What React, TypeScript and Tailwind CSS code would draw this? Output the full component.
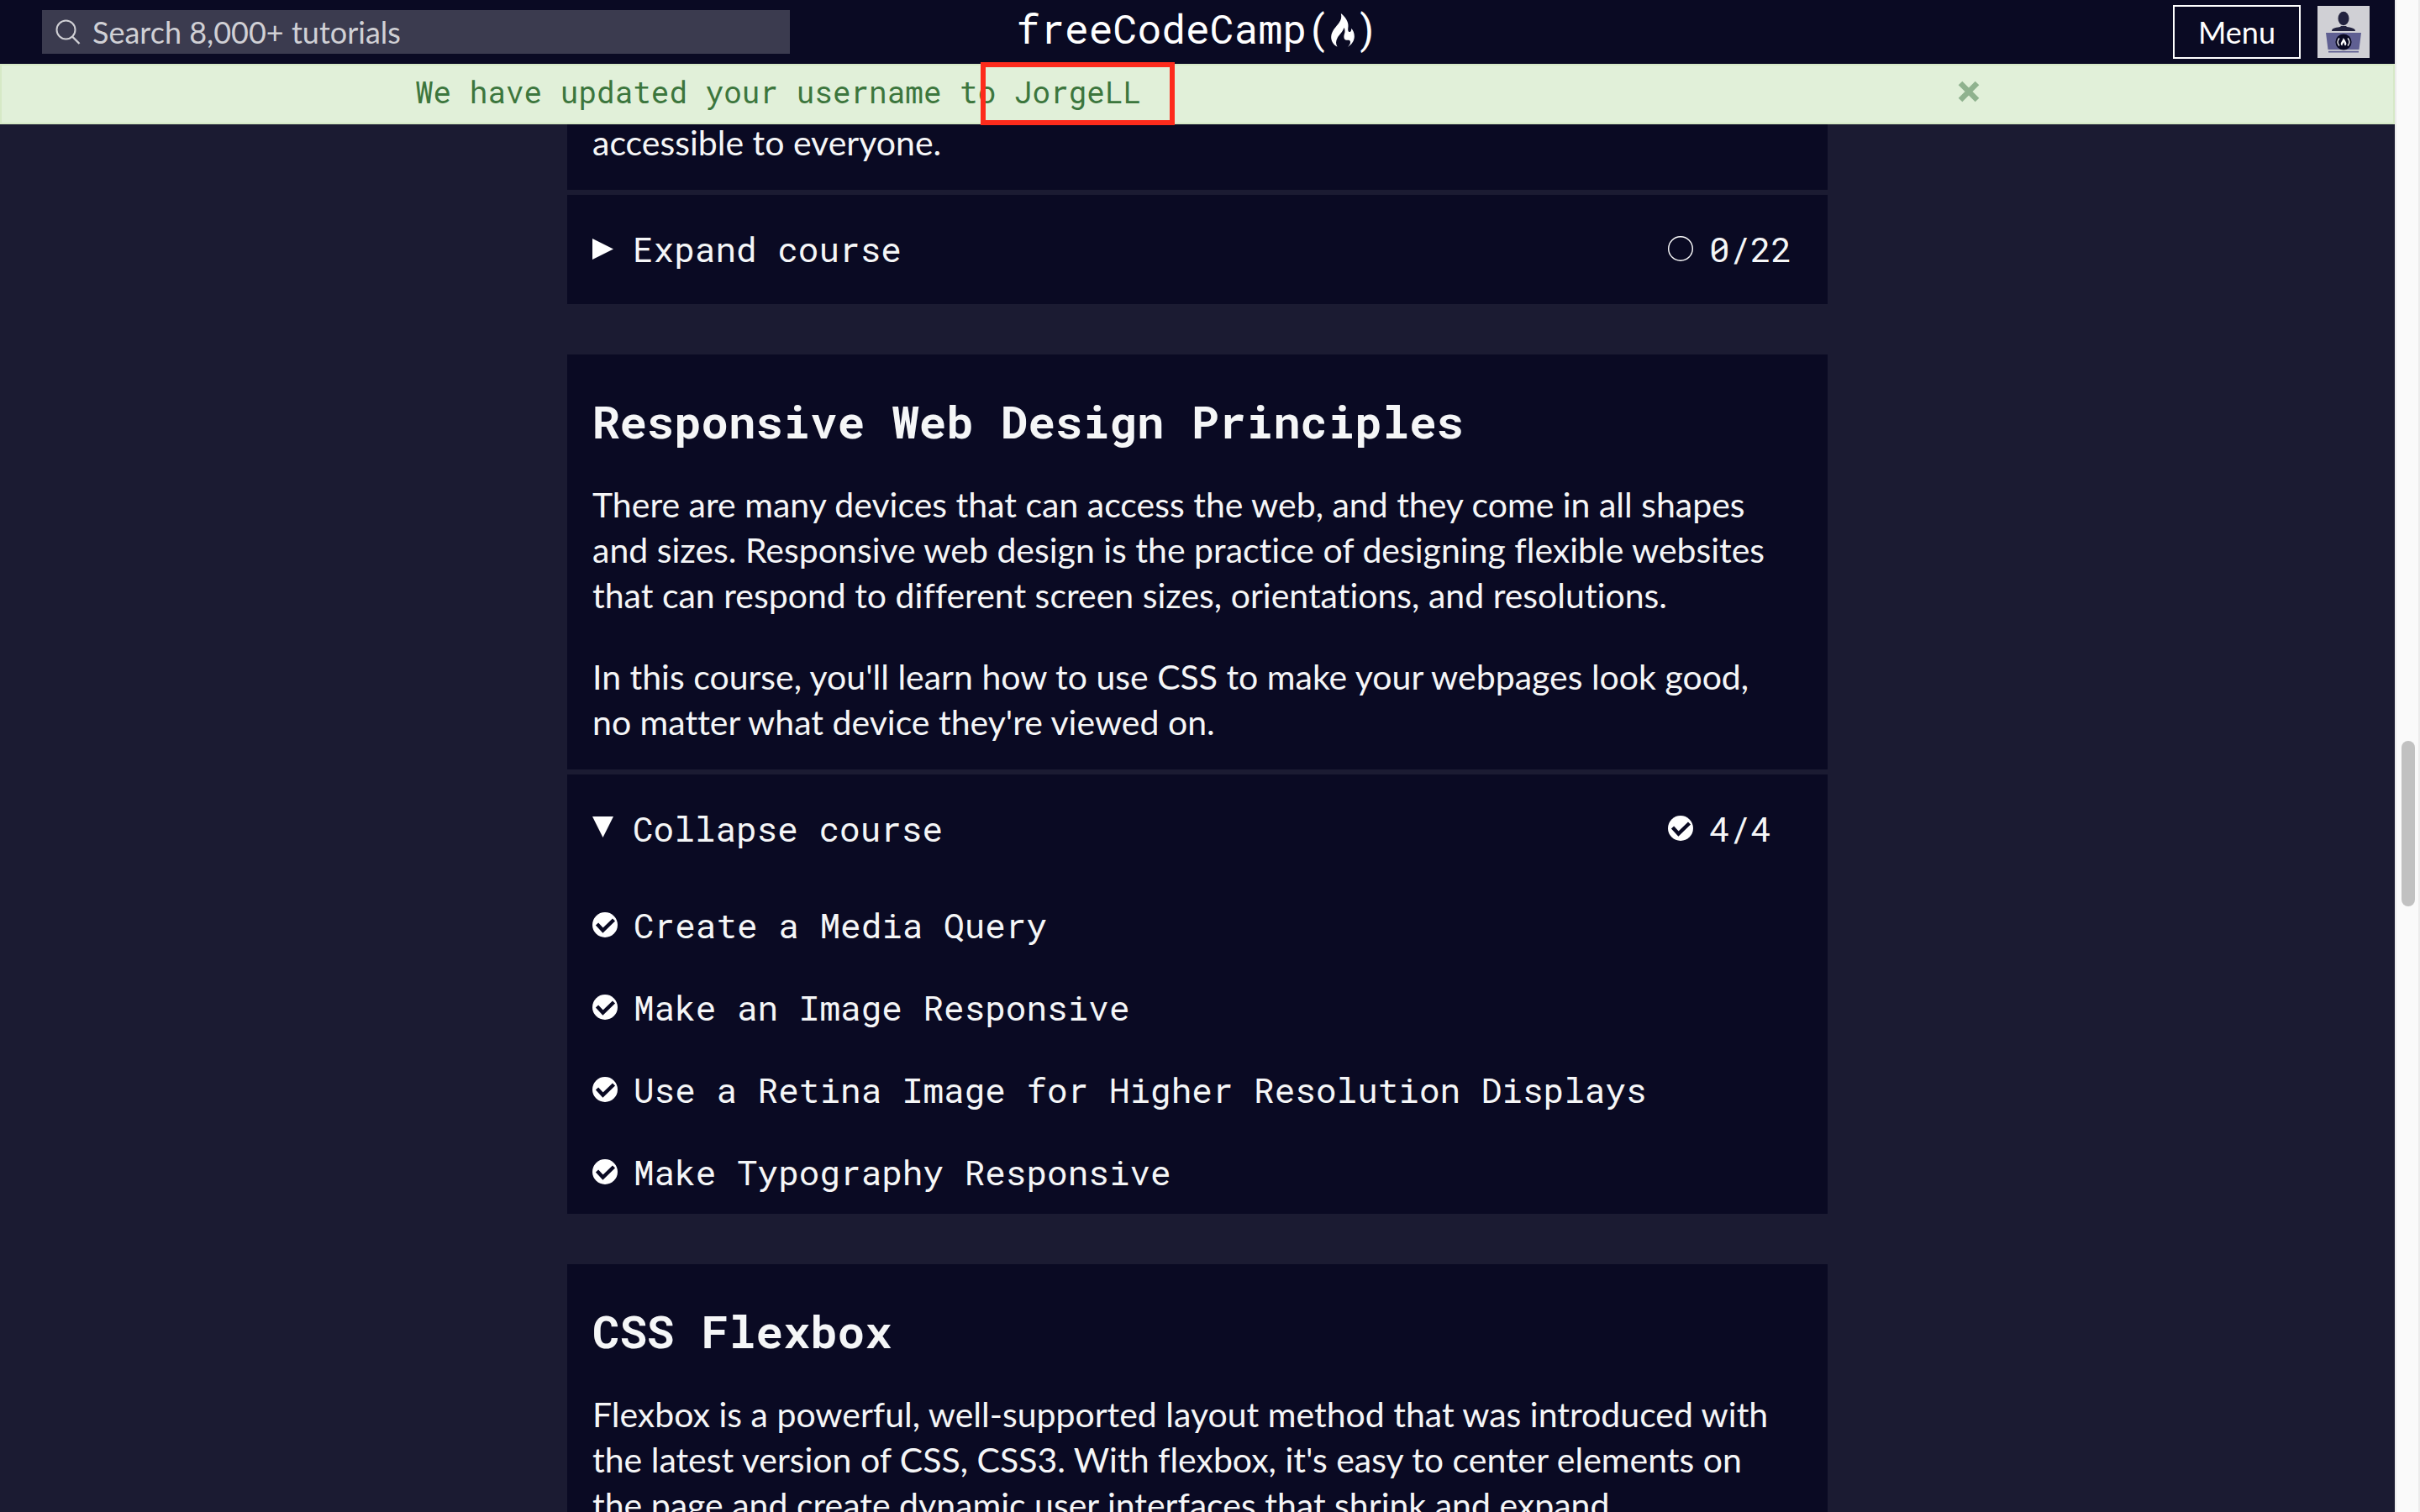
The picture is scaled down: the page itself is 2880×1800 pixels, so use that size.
import React from "react";

const mono = "font-['Roboto_Mono','Liberation_Mono',monospace]";

function CheckIcon() {
  return (
    <svg viewBox="0 0 30 30" className="size-[30px] shrink-0" aria-hidden="true">
      <circle cx="15" cy="15" r="15" fill="#fff" />
      <path d="M5.500 14 12.500 21.500 25.500 9" fill="none" stroke="#0a0a23" strokeWidth="4.400" />
    </svg>
  );
}

function EmptyCircleIcon() {
  return (
    <svg viewBox="0 0 30 30" className="size-[30px] shrink-0" aria-hidden="true">
      <circle cx="15" cy="15" r="14.300" fill="none" stroke="#fff" strokeWidth="1.400" />
    </svg>
  );
}

function Triangle({ open }: { open: boolean }) {
  return (
    <svg viewBox="0 0 25 25" className={open ? "mb-1 size-[25px] shrink-0" : "size-[25px] shrink-0"} aria-hidden="true">
      <path d={open ? "M0 0H25L12.500 25Z" : "M0 0 25 12.500 0 25Z"} fill="#fff" />
    </svg>
  );
}

const flame =
  "M35 0C38 14 36 22 28 34C18 48 1 62 0 84C0 100 9 113 22 119C16 108 16 98 23 86C30 74 42 66 46 50C50 58 50 66 47 74C44 84 46 94 54 95C62 95 66 94 68 99C70 107 66 113 59 120C73 112 83 98 83 82C83 70 79 60 72 53C73 61 70 67 65 66C59 65 60 56 61 46C62 28 50 12 35 0Z";

function Logo() {
  return (
    <a href="#home" aria-label="freeCodeCamp" className={`${mono} flex items-end pb-2 text-[48px] leading-[52px] text-white`}>
      <span>freeCodeCamp(</span>
      <svg viewBox="0 0 83 120" className="mb-1 h-10 w-7" aria-hidden="true">
        <path d={flame} fill="#fff" />
      </svg>
      <span>)</span>
    </a>
  );
}

function Avatar() {
  return (
    <svg viewBox="0 0 62 62" className="size-[62px]" aria-hidden="true">
      <path d="M0 0H62V62H0Z" fill="#d0d0d5" />
      <ellipse cx="31" cy="15" rx="6.500" ry="8.200" fill="#23233f" />
      <path d="M17 30C17 27 20 26 27 25L28 24H34L35 25C42 26 45 27 45 30Z" fill="#23233f" />
      <path d="M10 32H52L49.500 52H12.500Z" fill="#5f5f92" />
      <path d="M13 53.800H49V55.600H13Z" fill="#5f5f92" />
      <circle cx="31" cy="43" r="9.600" fill="#0a0a23" />
      <path d="M26 38.500Q22 43 26 47.500M36 38.500Q40 43 36 47.500" fill="none" stroke="#fff" strokeWidth="1.300" />
      <path d="M30.500 38C31 40.500 27.500 43 27.800 45.500 28 46.500 28.500 47 29.500 47.500 29 45.500 31 44.500 31.500 43 32 45 31.500 46 33 47.500 35 46 34.500 44 33.500 42.500 33 41 32 39.500 30.500 38Z" fill="#fff" />
    </svg>
  );
}

function Header() {
  return (
    <header className="grid grid-cols-[1fr_auto_1fr] items-center bg-[#0a0a23] px-[30px]">
      <form className="ml-5 flex h-[52px] max-w-[890px] items-center gap-[14px] bg-[#3b3b4f] pl-4" onSubmit={(e) => e.preventDefault()}>
        <svg viewBox="0 0 30 30" className="size-[30px] shrink-0" aria-hidden="true">
          <circle cx="12.500" cy="12.500" r="11" fill="none" stroke="#d0d0d5" strokeWidth="2" />
          <path d="M20 20.500 28.500 29" stroke="#d0d0d5" strokeWidth="2.400" />
        </svg>
        <input
          type="text"
          aria-label="Search"
          placeholder="Search 8,000+ tutorials"
          className="h-full min-w-0 flex-1 bg-transparent text-[36px] text-white outline-none placeholder:text-[#d0d0d5]"
        />
      </form>
      <Logo />
      <div className="flex h-[76px] items-center justify-end gap-5">
        <button type="button" className="h-16 border-2 border-white px-7 text-[36px] leading-[60px] text-white">
          Menu
        </button>
        <a href="#profile" aria-label="Profile">
          <Avatar />
        </a>
      </div>
    </header>
  );
}

function Alert() {
  return (
    <div role="alert" className="relative z-10 border-2 border-[#d6e9c6] bg-[#e1f0d9] pt-[6px] pb-3">
      <div className={`${mono} mx-auto flex max-w-[1862px] items-center justify-between text-[36px] leading-[50px] text-[#3c763d]`}>
        <p>
          We have updated your username to{" "}
          <span className="relative inline-block">
            JorgeLL
            <span className="absolute -inset-x-10 -top-[10px] -bottom-[15px] border-6 border-[#fd2b1c]" />
          </span>
        </p>
        <button type="button" aria-label="Close">
          <svg viewBox="0 0 26 26" className="size-[26px]" aria-hidden="true">
            <path d="M3 3 23 23M23 3 3 23" stroke="#8fb28e" strokeWidth="6.500" />
          </svg>
        </button>
      </div>
    </div>
  );
}

function Intro({ title, paragraphs }: { title?: string; paragraphs: string[] }) {
  return (
    <div className={title ? "bg-[#0a0a23] px-[30px] pt-[49px] pb-[29px]" : "bg-[#0a0a23] px-[30px] pb-[29px]"}>
      {title && <h2 className={`${mono} mb-[43px] text-[54px] leading-[60px] font-bold`}>{title}</h2>}
      <div className="flex max-w-[1420px] flex-col gap-[43px] text-[41px] leading-[54px] [font-variant-ligatures:none]">
        {paragraphs.map((p) => (
          <p key={p}>{p}</p>
        ))}
      </div>
    </div>
  );
}

function CourseToggle({ open, count }: { open: boolean; count: string }) {
  return (
    <button type="button" aria-expanded={open} className="flex w-full items-center justify-between pt-[37px] pb-[39px] text-left">
      <span className="flex items-center gap-[23px]">
        <Triangle open={open} />
        {open ? "Collapse course" : "Expand course"}
      </span>
      <span className="flex w-[160px] items-center gap-[19px]">
        {open ? <CheckIcon /> : <EmptyCircleIcon />}
        {count}
      </span>
    </button>
  );
}

const lessons = [
  "Create a Media Query",
  "Make an Image Responsive",
  "Use a Retina Image for Higher Resolution Displays",
  "Make Typography Responsive",
];

export default function App() {
  return (
    <div className="flex h-screen overflow-hidden bg-[#1b1b32] font-['Lato',sans-serif] text-[#f5f6f7]">
      <div className="flex min-w-0 flex-1 flex-col">
        <Header />
        <Alert />
        <main className="mx-auto -mt-[5px] flex min-h-0 w-full max-w-[1500px] flex-1 flex-col gap-[60px]">
          <section className="flex flex-col gap-[6px]">
            <Intro paragraphs={["accessible to everyone."]} />
            <div className={`${mono} bg-[#0a0a23] px-[30px] text-[41px] leading-[54px]`}>
              <CourseToggle open={false} count="0/22" />
            </div>
          </section>
          <section className="flex flex-col gap-[6px]">
            <Intro
              title="Responsive Web Design Principles"
              paragraphs={[
                "There are many devices that can access the web, and they come in all shapes and sizes. Responsive web design is the practice of designing flexible websites that can respond to different screen sizes, orientations, and resolutions.",
                "In this course, you'll learn how to use CSS to make your webpages look good, no matter what device they're viewed on.",
              ]}
            />
            <div className={`${mono} bg-[#0a0a23] px-[30px] pb-[23px] text-[41px] leading-[54px]`}>
              <CourseToggle open count="4/4" />
              <ul className="mt-[22px] flex flex-col gap-11">
                {lessons.map((lesson) => (
                  <li key={lesson}>
                    <a href="#lesson" className="flex items-center gap-[19px]">
                      <CheckIcon />
                      {lesson}
                    </a>
                  </li>
                ))}
              </ul>
            </div>
          </section>
          <section>
            <Intro
              title="CSS Flexbox"
              paragraphs={[
                "Flexbox is a powerful, well-supported layout method that was introduced with the latest version of CSS, CSS3. With flexbox, it's easy to center elements on the page and create dynamic user interfaces that shrink and expand",
              ]}
            />
          </section>
        </main>
      </div>
      <div className="w-[30px] shrink-0 border-x-2 border-[#ececec] bg-[#fafafa] px-[6px] pt-[882px]">
        <div className="h-[197px] w-4 rounded-full bg-[#c1c1c1]" />
      </div>
    </div>
  );
}
